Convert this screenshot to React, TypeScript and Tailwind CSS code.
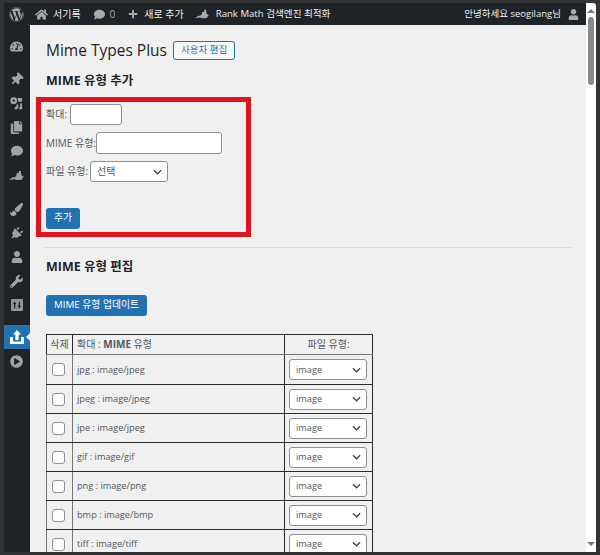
import React from "react";
import {
  FaWordpress, FaHome, FaComment, FaPlus, FaUser, FaThumbtack, FaCopy, FaPlug, FaWrench, FaPaintBrush, FaPlayCircle, FaTachometerAlt,
} from "react-icons/fa";

const font = { fontFamily: '"Open Sans","Noto Sans CJK KR",sans-serif' };

function Chevron() {
  return (
    <svg viewBox="0 0 10 6" className="w-[9px] h-[6px]" fill="none" stroke="#3c434a" strokeWidth="1.4">
      <path d="M1 1l4 4 4-4" />
    </svg>
  );
}

function Select({ value, w, size }: { value: string; w: string; size: string }) {
  return (
    <div className={`${w} ${size} h-[21px] bg-white border border-[#8c8f94] rounded-[3px] flex items-center justify-between pl-[6px] pr-[5px] text-[#50575e]`}>
      <span>{value}</span>
      <Chevron />
    </div>
  );
}

function BlueButton({ children }: { children: React.ReactNode }) {
  return (
    <div className="flex items-center justify-center h-[21px] px-[8px] rounded-[3px] bg-[#2271b1] text-white text-[9.8px]">
      {children}
    </div>
  );
}

function PlotIcon({ className = "" }: { className?: string }) {
  return (
    <svg viewBox="0 0 20 14" className={className} fill="currentColor">
      <path d="M0 13l5-4 2 1 3-3V4l3 0v-3l3 0v3l1 3 3 2-2 1v2l-3 1H10l-3-1z" />
    </svg>
  );
}

function MediaIcon() {
  return (
    <svg viewBox="0 0 14 14" className="w-[13px] h-[13px]" fill="currentColor">
      <circle cx="4" cy="4" r="3.6" />
      <circle cx="4" cy="4" r="1.2" fill="#1d2327" />
      <path d="M8 1h5v4H9zM7 8h2v4H7zM11 7h2v5h-2z" />
      <circle cx="6.5" cy="12" r="1.5" />
      <circle cx="11.5" cy="12" r="1.5" />
    </svg>
  );
}

function ToolsBox() {
  return (
    <svg viewBox="0 0 13 13" className="w-[12px] h-[12px]">
      <rect width="13" height="13" rx="1" fill="#8f9499" />
      <path d="M4 3v7M2.5 5h3M9 3v7M7.5 8h3" stroke="#1d2327" strokeWidth="1.3" />
    </svg>
  );
}

function UploadIcon() {
  return (
    <svg viewBox="0 0 14 14" className="w-[14px] h-[14px]" fill="#fff">
      <path d="M7 0l4 4.5H8.6V10H5.4V4.5H3z" />
      <path d="M0 7h3v4.5h8V7h3v7H0z" />
    </svg>
  );
}

const rows = [
  "jpg : image/jpeg",
  "jpeg : image/jpeg",
  "jpe : image/jpeg",
  "gif : image/gif",
  "png : image/png",
  "bmp : image/bmp",
  "tiff : image/tiff",
];

function Slot({ children }: { children: React.ReactNode }) {
  return <div className="h-[24px] pr-[1px] flex items-center justify-center text-[#9ea3a8]">{children}</div>;
}

function Sidebar() {
  return (
    <div className="w-[26px] shrink-0 bg-[#1d2327] flex flex-col pt-[9px]">
      <Slot><FaTachometerAlt size={13} /></Slot>
      <div className="h-[9px]" />
      <Slot><FaThumbtack size={13} className="rotate-45" /></Slot>
      <Slot><MediaIcon /></Slot>
      <Slot><FaCopy size={13} /></Slot>
      <Slot><FaComment size={12} /></Slot>
      <Slot><PlotIcon className="w-[15px] h-[11px]" /></Slot>
      <div className="h-[10px]" />
      <Slot><FaPaintBrush size={13} /></Slot>
      <Slot><FaPlug size={13} className="rotate-45" /></Slot>
      <Slot><FaUser size={12} /></Slot>
      <Slot><FaWrench size={13} /></Slot>
      <Slot><ToolsBox /></Slot>
      <div className="h-[8px]" />
      <div className="relative h-[24px] pr-[1px] bg-[#2271b1] flex items-center justify-center">
        <UploadIcon />
        <div className="absolute right-0 top-[8px] w-0 h-0 border-y-[4px] border-y-transparent border-r-[4px] border-r-[#f0f0f1]" />
      </div>
      <Slot><FaPlayCircle size={13} /></Slot>
    </div>
  );
}

export default function App() {
  return (
    <div style={font} className="w-[600px] h-[555px] overflow-hidden bg-[#333333] flex flex-col pt-[3px] px-[4px] pb-[3px]">
      <div className="flex flex-1 min-h-0">
        <div className="flex flex-col flex-1 min-w-0">
          <div className="h-[22px] shrink-0 bg-[#1d2327] flex items-center justify-between text-[10px] text-[#f0f0f1] pr-[7px]">
            <div className="flex items-center">
              <FaWordpress size={15} className="text-[#a7aaad] ml-[5px]" />
              <FaHome size={13} className="text-[#a7aaad] ml-[11px]" />
              <span className="ml-[5px]">서기록</span>
              <FaComment size={11} className="text-[#a7aaad] ml-[13px]" />
              <span className="ml-[5px] text-[#a7aaad]">0</span>
              <FaPlus size={10} className="text-[#a7aaad] ml-[13px]" />
              <span className="ml-[6px]">새로 추가</span>
              <PlotIcon className="w-[14px] h-[10px] text-[#a7aaad] ml-[11px]" />
              <span className="ml-[7px] text-[9.6px]">Rank Math 검색엔진 최적화</span>
            </div>
            <div className="flex items-center">
              <span className="text-[9.5px]">안녕하세요 seogilang님</span>
              <FaUser size={11} className="text-[#a7aaad] ml-[7px]" />
            </div>
          </div>
          <div className="flex flex-1 min-h-0">
            <Sidebar />
            <div className="flex-1 min-w-0 bg-[#f0f0f1] overflow-hidden pl-[6px] pr-[13px] text-[#50575e]">
              <div className="pl-[10px] mt-[16px] flex items-center h-[19px]">
                <h1 className="text-[15.5px] leading-[19px] text-[#1d2327]">Mime Types Plus</h1>
                <div className="ml-[6px] h-[19px] px-[7px] flex items-center border border-[#2271b1] rounded-[3px] text-[9.5px] text-[#2271b1] bg-[#f6f7f7]">사용자 편집</div>
              </div>
              <h2 className="pl-[10px] mt-[12px] text-[12.5px] leading-[18px] font-bold text-[#1d2327]">MIME 유형 추가</h2>
              <div className="mt-[7px] w-[215px] h-[140px] border-[5px] border-[#e0141e] pl-[5px] pt-[2px] text-[10px]">
                <div className="flex items-center gap-[3px] h-[21px]">
                  <span>확대:</span>
                  <div className="w-[52px] h-[21px] bg-white border border-[#8c8f94] rounded-[3px]" />
                </div>
                <div className="flex items-center h-[22px] mt-[7px]">
                  <span>MIME 유형:</span>
                  <div className="w-[126px] h-[22px] bg-white border border-[#8c8f94] rounded-[3px]" />
                </div>
                <div className="flex items-center gap-[2px] h-[21px] mt-[7px]">
                  <span>파일 유형:</span>
                  <Select value="선택" w="w-[78px]" size="text-[10px]" />
                </div>
                <div className="mt-[26px] flex"><BlueButton>추가</BlueButton></div>
              </div>
              <div className="mt-[10px] ml-[8px] h-px bg-[#dcdcde]" />
              <h2 className="pl-[10px] mt-[10px] text-[12.5px] leading-[18px] font-bold text-[#1d2327]">MIME 유형 편집</h2>
              <div className="pl-[10px] mt-[19px] flex"><BlueButton>MIME 유형 업데이트</BlueButton></div>
              <table className="ml-[10px] mt-[18px] border-collapse w-[326px] table-fixed text-[9.2px]">
                <colgroup>
                  <col className="w-[26px]" />
                  <col className="w-[212px]" />
                  <col className="w-[88px]" />
                </colgroup>
                <thead>
                  <tr className="h-[20px] text-[10px]">
                    <th className="border border-[#2b2b2b] border-b-[#777] font-normal text-center">삭제</th>
                    <th className="border border-[#2b2b2b] border-b-[#777] font-normal text-left pl-[4px]">확대 : <b>MIME</b> 유형</th>
                    <th className="border border-[#2b2b2b] border-b-[#777] font-normal text-center">파일 유형:</th>
                  </tr>
                </thead>
                <tbody>
                  {rows.map((r, i) => (
                    <tr key={r} className={i === 0 ? "h-[30px]" : "h-[29px]"}>
                      <td className="border border-[#2b2b2b] border-l-[#777] border-r-[#777]">
                        <div className="ml-[5px] w-[13px] h-[13px] bg-white border border-[#8c8f94] rounded-[3px]" />
                      </td>
                      <td className="border border-[#2b2b2b] pl-[4px]">{r}</td>
                      <td className="border border-[#2b2b2b] pl-[4px]">
                        <Select value="image" w="w-[78px]" size="text-[9.2px]" />
                      </td>
                    </tr>
                  ))}
                </tbody>
              </table>
            </div>
          </div>
        </div>
        <div className="w-[10px] shrink-0 bg-white rounded-tr-[3px] flex flex-col items-center pt-[6px] pb-[6px]">
          <div className="w-0 h-0 border-x-[4px] border-x-transparent border-b-[4px] border-b-[#777]" />
          <div className="mt-[4px] w-[6px] h-[68px] rounded-[3px] bg-[#8a8a8a]" />
          <div className="flex-1" />
          <div className="w-0 h-0 border-x-[4px] border-x-transparent border-t-[4px] border-t-[#777]" />
        </div>
      </div>
    </div>
  );
}
